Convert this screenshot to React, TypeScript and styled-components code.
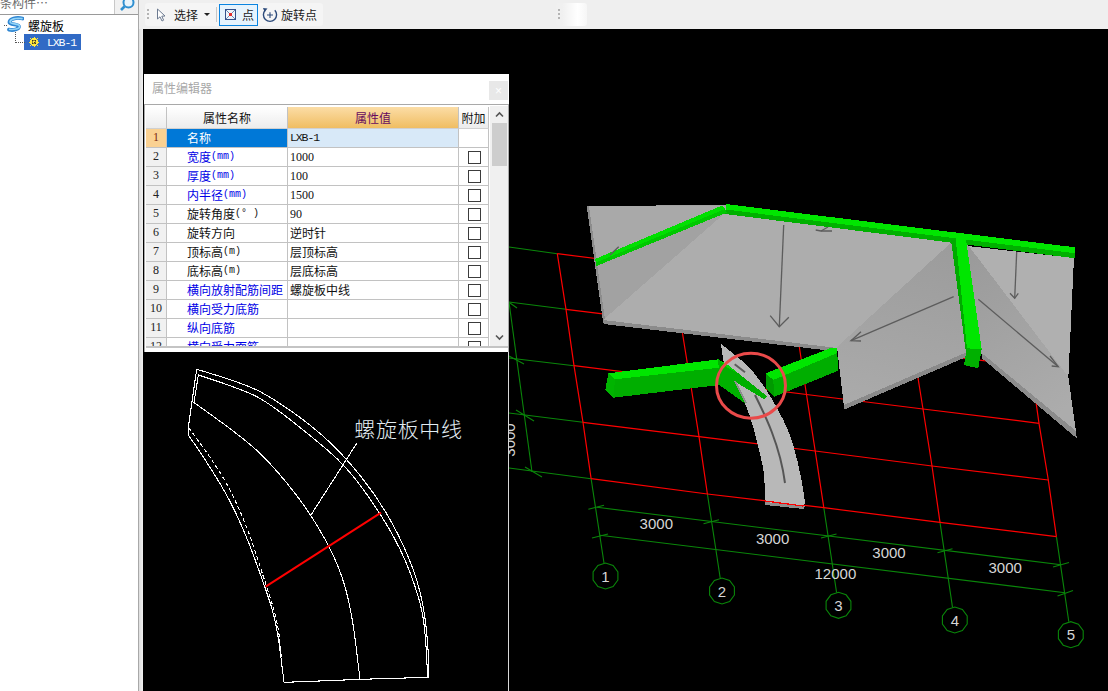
import React from "react";
import styled, { createGlobalStyle } from "styled-components";

const CJK = `"Noto Sans CJK SC", "Liberation Sans", sans-serif`;
const MONO = `"Liberation Mono", "Noto Sans CJK SC", monospace`;
const DIGITS = `"Liberation Serif", "Noto Sans CJK SC", serif`;

const Global = createGlobalStyle`
  html, body { margin: 0; padding: 0; background: #fff; overflow: hidden; }
  * { box-sizing: border-box; }
`;

const Root = styled.div`
  width: 1108px; height: 691px; display: flex; overflow: hidden;
  font-family: ${CJK}; font-size: 12px; color: #111;
`;

/* ---------- sidebar ---------- */
const Sidebar = styled.aside`
  width: 139px; flex: none; background: #fff; border-right: 1px solid #a8a8a8;
  display: flex; flex-direction: column;
`;
const SearchBar = styled.div`
  height: 15px; flex: none; display: flex; border-bottom: 1px solid #9a9a9a; overflow: hidden;
`;
const SearchInput = styled.div`
  width: 115px; flex: none; border-right: 1px solid #c8c8c8; color: #6a6a6a;
  font-size: 12px; line-height: 14px; margin-top: -4px; white-space: nowrap; overflow: hidden;
`;
const SearchBtn = styled.div`
  flex: 1; background: #f1f1f1; display: flex; justify-content: center; align-items: flex-start; overflow: hidden;
`;
const Tree = styled.div`
  display: flex; flex-direction: column;
`;
const RootNode = styled.div`
  position: relative; height: 19px; display: flex; align-items: center; gap: 4px; margin-left: 7px;
  font-size: 12px; color: #000; line-height: 19px; padding-bottom: 0;
  &::before { content: ""; position: absolute; left: -3px; top: 10px; width: 3px; border-top: 1px dotted #555; }
`;
const TreeLabel = styled.span`
  position: relative; top: 1px;
`;
const ChildNode = styled.div`
  position: relative; width: 57px; height: 16px; margin-left: 24px; background: #316ac5; color: #fff;
  display: flex; align-items: center; gap: 8px; padding-left: 5px;
  &::before { content: ""; position: absolute; left: -9px; top: -2px; width: 9px; height: 10px;
    border-left: 1px dotted #555; border-bottom: 1px dotted #555; }
`;
const MonoText = styled.span`
  font-family: ${MONO}; font-size: 11.5px; letter-spacing: -1.1px; line-height: 16px; white-space: nowrap;
  position: relative; top: 1px;
`;
const DigitText = styled.span`
  font-family: ${DIGITS}; font-size: 12px; line-height: 16px; white-space: nowrap;
  position: relative; top: 1px;
`;
const Unit = styled.span`
  font-family: ${MONO}; font-size: 10px;
`;

/* ---------- main ---------- */
const Main = styled.main`
  flex: 1; min-width: 0; display: flex; flex-direction: column; background: #efefef;
`;
const Toolbar = styled.div`
  height: 29px; flex: none; display: flex; align-items: flex-start; padding: 3px 0 0 6px; background: #efefef;
`;
const ToolGroup = styled.div`
  height: 23px; display: flex; align-items: center; background: #f5f5f5; border-radius: 3px;
`;
const MainGroup = styled(ToolGroup)`
  width: 178px; padding-left: 2px;
`;
const SpareGroup = styled(ToolGroup)`
  width: 31px; margin-left: 233px; padding-left: 2px;
  background: linear-gradient(90deg, #f0f0f0 20%, #fff 70%, #f6f6f6);
`;
const Grip = styled.span`
  width: 2px; height: 12px; flex: none; margin-right: 7px;
  background: repeating-linear-gradient(180deg, #b4b4b4 0 2px, transparent 2px 4px);
`;
const ToolText = styled.span<{ $gap?: number }>`
  font-size: 12px; color: #1a1a1a; white-space: nowrap; margin-left: ${(p) => p.$gap ?? 0}px;
`;
const Sep = styled.span`
  width: 1px; height: 15px; background: #c8c8c8; margin: 0 2px 0 6px; flex: none;
`;
const ActiveTool = styled.div`
  width: 39px; height: 22px; display: flex; align-items: center; gap: 6px; padding-left: 5px;
  background: #e6f3fd; border: 1px solid #0a84e0; flex: none; margin-right: 4px;
`;
const Caret = styled.span`
  width: 0; height: 0; margin-left: 6px; border-left: 3px solid transparent; border-right: 3px solid transparent;
  border-top: 3px solid #222;
`;
const Workspace = styled.div`
  flex: 1; min-height: 0; display: flex;
`;
const Gutter = styled.div`
  width: 4px; flex: none; background: linear-gradient(90deg, #dedede, #f1f1f1);
`;
const Canvas = styled.div`
  position: relative; flex: 1; background: #000; overflow: hidden;
`;
const SceneSvg = styled.svg`
  display: block;
`;
const PreviewSvg = styled.svg`
  display: block;
`;
const DimLabel = styled.text`
  font-family: "Liberation Sans", sans-serif; font-size: 15px; fill: #d6d6d6; text-anchor: middle;
`;

/* ---------- floating property panel ---------- */
const Panel = styled.section`
  position: absolute; left: 1px; top: 45px; width: 365px; height: 617px;
  display: flex; flex-direction: column; background: #fff;
`;
const TitleBar = styled.header`
  height: 30px; flex: none; position: relative; display: flex; align-items: center; padding: 0 0 4px 8px;
  color: #a8a8a8; font-size: 12px; background: #fff;
`;
const CloseBtn = styled.span`
  position: absolute; right: 1px; top: 7px; width: 19px; height: 19px; background: #e8e8e8; color: #fff;
  display: flex; align-items: center; justify-content: center; font: 12px "Liberation Sans", sans-serif;
`;
const TableArea = styled.div`
  height: 248px; flex: none; border-top: 1px solid #a9a9a9; border-left: 1px solid #a9a9a9; border-right: 1px solid #a9a9a9;
  padding: 2px 0 4px 1px; display: flex; flex-direction: column;
`;
const TableRow = styled.div`
  display: flex; height: 239px; flex: none;
`;
const Grid = styled.div`
  width: 343px; flex: none; height: 239px; overflow: hidden; margin-right: 1px;
`;
const Row = styled.div`
  display: grid; grid-template-columns: 21px 121px 171px 30px; height: 19px;
`;
const HeadRow = styled(Row)`
  height: 22px;
`;
const Cell = styled.div`
  border-right: 1px solid #c2c2c2; border-bottom: 1px solid #c2c2c2; display: flex; align-items: center;
  white-space: nowrap; overflow: hidden;
`;
const HeadCell = styled(Cell)<{ $active?: boolean }>`
  justify-content: center; font-size: 12px; border-bottom-color: #d0d0d0; padding-bottom: 1px;
  color: ${(p) => (p.$active ? "#660a60" : "#111")};
  background: ${(p) => (p.$active ? "linear-gradient(180deg,#fbdda6,#f0bd62)" : "linear-gradient(180deg,#fff,#ececec)")};
`;
const NumCell = styled(Cell)<{ $active?: boolean }>`
  justify-content: center; font-family: ${DIGITS}; font-size: 12px; padding-bottom: 1px;
  background: ${(p) => (p.$active ? "#fad192" : "#f1f1f1")};
  color: ${(p) => (p.$active ? "#7a2a10" : "#222")};
`;
const NameCell = styled(Cell)<{ $blue?: boolean; $active?: boolean }>`
  padding: 0 0 1px 20px; font-size: 12px;
  background: ${(p) => (p.$active ? "#0078d7" : "#fff")};
  color: ${(p) => (p.$active ? "#fff" : p.$blue ? "#0000e6" : "#111")};
`;
const ValueCell = styled(Cell)<{ $active?: boolean }>`
  padding: 0 0 2px 2px; font-size: 12px; color: #111;
  background: ${(p) => (p.$active ? "#d8e9f8" : "#fff")};
`;
const CheckCell = styled(Cell)`
  justify-content: center; padding-left: 2px;
`;
const Check = styled.span`
  width: 13px; height: 13px; border: 1px solid #3c3c3c; background: #fff; display: block;
`;
const Scrollbar = styled.div`
  width: 18px; flex: none; margin-top: -1px; background: #f0f0f0; display: flex; flex-direction: column; align-items: center;
`;
const ScrollArrow = styled.div`
  height: 17px; flex: none; display: flex; align-items: center; justify-content: center;
`;
const ScrollTrack = styled.div`
  flex: 1; width: 100%; display: flex; flex-direction: column; align-items: center;
`;
const ScrollThumb = styled.div`
  width: 15px; height: 43px; background: #cdcdcd;
`;
const PanelRule = styled.div`
  height: 2px; flex: none; background: #c4c4c4;
`;
const Preview = styled.div`
  flex: 1; background: #000; border-right: 1px solid #d8d8d8; overflow: hidden;
`;
const PreviewLabel = styled.text`
  font-family: ${CJK}; font-size: 63px; letter-spacing: 2px; fill: #e2edf3; font-weight: 300;
`;

/* ---------- drawing helpers ---------- */
type P = [number, number];
const pts = (a: P[]) => a.map((p) => p.join(",")).join(" ");
const curve = (a: P[], start = true) => {
  let d = start ? `M${a[0][0]},${a[0][1]}` : `L${a[0][0]},${a[0][1]}`;
  for (let i = 1; i < a.length - 1; i++) {
    const mx = (a[i][0] + a[i + 1][0]) / 2;
    const my = (a[i][1] + a[i + 1][1]) / 2;
    d += ` Q${a[i][0]},${a[i][1]} ${mx},${my}`;
  }
  const l = a[a.length - 1];
  return `${d} L${l[0]},${l[1]}`;
};
const ring = (cx: number, cy: number, r: number) =>
  pts(Array.from({ length: 10 }, (_, i) => {
    const t = (Math.PI / 5) * i + Math.PI / 10;
    return [+(cx + r * Math.cos(t)).toFixed(1), +(cy + r * Math.sin(t)).toFixed(1)] as P;
  }));

const redRows: P[][] = [
  [[557.3, 253.7], [1022, 312]],
  [[566, 309.3], [1031, 366.5]],
  [[574, 365.7], [690, 380], [806.5, 394.5], [923, 409], [1039, 423.3]],
  [[583, 422.3], [699, 436.7], [815.2, 451], [932, 466], [1048.3, 480]],
  [[591.1, 478.7], [707.4, 494], [823.8, 507.7], [940, 522.3], [1056.4, 536.7]],
];
const redCols: P[][] = [
  [[557.3, 253.7], [566, 309.3], [574, 365.7], [583, 422.3], [591.1, 478.7]],
  [[673, 268], [681, 324], [690, 380], [699, 436.7], [707.4, 494]],
  [[790, 282], [798, 338], [806.5, 394.5], [815.2, 451], [823.8, 507.7]],
  [[906, 297], [914, 353], [923, 409], [932, 466], [940, 522.3]],
  [[1022, 312], [1031, 366.5], [1039, 423.3], [1048.3, 480], [1056.4, 536.7]],
];
const greenLines: [P, P][] = [
  [[509, 247], [557.3, 253.7]], [[509, 302], [566, 309.3]], [[509, 358], [574, 365.7]],
  [[509, 413], [583, 422.3]], [[509, 468], [591.1, 478.7]],
  [[509, 302], [532, 472]],
  [[591.1, 478.7], [604, 563]], [[707.4, 494], [720.2, 578]], [[823.8, 507.7], [836.6, 592.7]],
  [[940, 522.3], [952.5, 607.3]], [[1056.4, 536.7], [1068.8, 621.7]],
  [[597, 507.3], [1061, 564.7]], [[600, 535.3], [1065, 592.7]],
];
const greenTicks: [P, P][] = [
  [[510, 303], [517, 308]], [[509, 356], [524, 364]], [[516, 410], [534, 421]], [[525, 467], [542, 477]],
  [[588.4, 509.3], [604, 505.3]], [[703.5, 523.7], [719, 519.7]], [[821, 538], [836.5, 534]],
  [[937.5, 552.7], [952.5, 548.7]], [[1053, 567], [1069, 562.5]],
  [[592, 538], [608, 534]], [[1057.5, 596], [1073, 590.5]],
];
const bubbles: { n: number; c: P }[] = [
  { n: 1, c: [605.5, 576] }, { n: 2, c: [722, 591] }, { n: 3, c: [838.5, 605.3] },
  { n: 4, c: [954.8, 620] }, { n: 5, c: [1070.8, 634.7] },
];
const dims: { t: string; c: P }[] = [
  { t: "3000", c: [656.3, 528.5] }, { t: "3000", c: [772.6, 543.5] }, { t: "3000", c: [889, 557.8] },
  { t: "3000", c: [1005.2, 572.5] }, { t: "12000", c: [835.4, 578.8] },
];
const arrows: P[][] = [
  [[783.7, 225], [779.3, 326.7]], [[770.2, 315.7], [779.3, 326.7], [788.8, 317.3]],
  [[815.7, 230], [821, 231], [832, 231]], [[821, 231], [828, 227]],
  [[953.7, 296.7], [851, 340.7]], [[861, 331.7], [851, 340.7], [861, 341]],
  [[1016.7, 251.7], [1014.7, 298.3]], [[1010, 293.3], [1014.7, 298.3], [1018.3, 293.3]],
  [[978.3, 299.3], [1058.3, 366.7]], [[1050, 356], [1058.3, 366.7], [1051.7, 366]],
  [[618.7, 246.7], [610, 255]],
];
const plateOuter: P[] = [[721, 344], [746.7, 363.3], [763.3, 385], [776.7, 406.7], [790, 433.3], [798.3, 463.3], [803.3, 490], [805, 503]];
const plateInner: P[] = [[765, 502.3], [765, 476.7], [760, 453.3], [753.3, 426.7], [745, 401.7], [734, 381.7], [726, 370], [723, 360], [721, 344]];

const Scene = () => (
  <SceneSvg width={965} height={662} viewBox="143 29 965 662" xmlns="http://www.w3.org/2000/svg">
    <defs>
      <linearGradient id="midSlab" x1="0.6" y1="0" x2="0.4" y2="1">
        <stop offset="0" stopColor="#9c9c9c" />
        <stop offset="1" stopColor="#aaaaaa" />
      </linearGradient>
      <linearGradient id="rightSlab" x1="0.2" y1="0" x2="0.6" y2="1">
        <stop offset="0" stopColor="#9a9a9a" />
        <stop offset="1" stopColor="#acacac" />
      </linearGradient>
    </defs>
    <g fill="none">
      <g stroke="#0a860a" strokeWidth={1.1}>
        {greenLines.map(([a, b], i) => <line key={i} x1={a[0]} y1={a[1]} x2={b[0]} y2={b[1]} />)}
        {greenTicks.map(([a, b], i) => <line key={i} x1={a[0]} y1={a[1]} x2={b[0]} y2={b[1]} />)}
        {bubbles.map((b) => <polygon key={b.n} points={ring(b.c[0], b.c[1], 13)} />)}
      </g>
      <g stroke="#ff0000" strokeWidth={1.2}>
        {redRows.map((r, i) => <polyline key={i} points={pts(r)} />)}
        {redCols.map((r, i) => <polyline key={i} points={pts(r)} />)}
      </g>
    </g>

    {dims.map((d, i) => <DimLabel key={i} x={d.c[0]} y={d.c[1]}>{d.t}</DimLabel>)}
    {bubbles.map((b) => <DimLabel key={b.n} x={b.c[0]} y={b.c[1] + 5.5}>{b.n}</DimLabel>)}
    <DimLabel x={515} y={440} transform="rotate(-90 515 440)">3000</DimLabel>

    <g shapeRendering="crispEdges">
      {/* left slab */}
      <polygon points="586.7,206 725.5,205 727,215 603,322" fill="#a2a2a2" />
      <polygon points="586.7,206 725,206 596,262" fill="#a9a9a9" />
      <polygon points="586.7,206 589,206 605,320 603,321" fill="#8c8c8c" />
      <polygon points="725,213 955,240 838,349 603,320" fill="#adadad" />
      <polygon points="603,320 837.6,348 832.5,351 603.6,324" fill="#8b8b8b" />
      {/* middle slab */}
      <polygon points="954,240 837,347 844,407 967,353" fill="url(#midSlab)" />
      <polygon points="844,405 967,352 967,356.7 844.3,409.5" fill="#8a8a8a" />
      {/* right slab */}
      <polygon points="967.3,246 1074,258 1068.3,378 1064,378" fill="#b0b0b0" />
      <polygon points="955,243 968,245 1068.3,376.7 1076,431.7 981.7,354 965,352" fill="url(#rightSlab)" />
      <polygon points="981.7,353 1076,431 1076.7,438.3 981.7,358" fill="#8c8c8c" />

      {/* spiral plate */}
      <path d={`${curve(plateOuter)} L803.5,505 ${curve(plateInner, false)} Z`} fill="#b8b8b8" />
      <polygon points="765,502 805,506 804,509 765,505" fill="#8e8e8e" />
      <line x1={765} y1={501} x2={803} y2={506} stroke="#ff0000" strokeWidth={1.2} />

      {/* left beam */}
      <polygon points="608.3,373.3 718.3,359.3 728,366.7 615,379.3" fill="#00e600" />
      <polygon points="615,379.3 728,366.7 719.3,385 613.3,397.7" fill="#00ae00" />
      <polygon points="608.3,373.3 615,379.3 613.3,397.7 605.3,390" fill="#00b400" />
      <polygon points="718.3,359.3 728,365 767.7,396.7 764,399 734,381 745,403.3 719.3,385" fill="#00b000" />
      <polygon points="718.3,359.3 728,365 738,373 728,368" fill="#00d800" />
      <polygon points="734,381 764,399 757,399 745,403.3" fill="#b8b8b8" />
      <polygon points="734,381 736,381 747,403 745,403.3" fill="#8e8e8e" />

      {/* right beam */}
      <polygon points="765.7,373.3 830,348.3 837.3,348.3 837.3,353 773.3,380" fill="#00e600" />
      <polygon points="773.3,380 837.3,353 838.3,370.7 774.3,396.7" fill="#00ae00" />
      <polygon points="765.7,373.3 773.3,380 774.3,396.7 766,388.3" fill="#009a00" />

      {/* top beam */}
      <polygon points="725.5,204 1075,247.3 1075,253.3 725.5,209.5" fill="#00e600" />
      <polygon points="725.5,209.5 1075,253.3 1075,258.3 725,214" fill="#00b000" />
      {/* left upper beam */}
      <polygon points="595,259 722,205.5 725,209 596,262.5" fill="#00e000" />
      <polygon points="596,262.5 725,209 727,212.5 596.5,266" fill="#00c800" />
      {/* cross beam */}
      <polygon points="951,240 958,240 970,349 965.5,349" fill="#00aa00" />
      <polygon points="955.4,236 965.5,236 981.7,349.3 967,348.3" fill="#00e600" />
      <polygon points="966.7,348.3 981.7,349.3 978.3,368.3 964,365" fill="#00b000" />
    </g>

    <g fill="none" stroke="#5c5c5c" strokeWidth={1.3}>
      {arrows.map((a, i) => <polyline key={i} points={pts(a)} />)}
      <line x1={734.7} y1={364.3} x2={745} y2={372.3} strokeWidth={2} />
      <path d="M755,395 C765,415 780,445 785,483" strokeWidth={2} stroke="#555" />
    </g>
    <ellipse cx={751} cy={385.7} rx={34.5} ry={32.5} fill="none" stroke="#ea4a4a" strokeWidth={3} />
  </SceneSvg>
);

const outerA: P[] = [[155, 58], [300, 100], [400, 155], [510, 235], [600, 320], [700, 445], [780, 590], [830, 730], [850, 880], [850, 980]];
const outerB: P[] = [[160, 75], [300, 120], [380, 165], [500, 260], [600, 345], [690, 465], [770, 600], [822, 740], [840, 830], [848, 980]];
const middle: P[] = [[147, 158], [300, 265], [400, 365], [500, 495], [580, 640], [620, 780], [645, 988]];
const leftSolid: P[] = [[130, 255], [210, 370], [290, 520], [360, 710], [395, 820], [417, 995]];
const leftDash: P[] = [[130, 232], [220, 350], [300, 510], [365, 710], [400, 820], [412, 960]];

const PreviewDrawing = () => (
  <PreviewSvg width={364} height={339} viewBox="-3 6 1092 1017">
    <g fill="none" stroke="#fff" strokeWidth={3.2} shapeRendering="crispEdges">
      <path d={curve(outerA)} />
      <path d={curve(outerB)} />
      <path d={curve(middle)} />
      <path d={curve(leftSolid)} />
      <path d={curve(leftDash)} strokeDasharray="12 8" />
      <polyline points="155,58 130,232 130,255" />
      <line x1={160} y1={75} x2={147} y2={158} />
      <polyline points="417,997 550,992 645,988 850,982 850,980" />
      <line x1={635} y1={280} x2={498} y2={495} />
    </g>
    <line x1={362} y1={710} x2={708} y2={488} stroke="#ff0000" strokeWidth={6} />
    <PreviewLabel x={628} y={260}>螺旋板中线</PreviewLabel>
  </PreviewSvg>
);

const LogoS = () => (
  <svg width={17} height={17} viewBox="0 0 17 17">
    <g fill="none" strokeLinecap="round">
      <path d="M15.5,2.5 C9,1 2.5,3 2.5,6.2 C2.5,9 12,7.8 12,10.6 C12,13.4 6,14.6 2,13.6" stroke="#2f86d2" strokeWidth={3.8} />
      <path d="M15,2.6 C9,1.4 3,3.4 3,6 C3,8.4 12.6,7.4 12.6,10.4 C12.6,13 6.5,14 2.6,13.3" stroke="#93d4f7" strokeWidth={1.6} />
    </g>
  </svg>
);
const Gear = () => (
  <svg width={10} height={10} viewBox="0 0 10 10" shapeRendering="crispEdges">
    <circle cx={5} cy={5} r={4.2} fill="#ffe93c" />
    <path d="M5,0V10M0,5H10M1.2,1.2L8.8,8.8M8.8,1.2L1.2,8.8" stroke="#ffe93c" strokeWidth={1} />
    <path d="M3,3H4V4H3ZM6,3H7V4H6ZM3,6H4V7H3ZM6,6H7V7H6ZM4.5,4.5H5.5V5.5H4.5Z" fill="#3a3a20" />
    <path d="M4,3H6V4H4ZM3,4H4V6H3ZM6,4H7V6H6ZM4,6H6V7H4Z" fill="#8a8430" />
  </svg>
);
const Magnifier = () => (
  <svg width={18} height={11} viewBox="0 0 18 11">
    <circle cx={10.5} cy={2.5} r={5} fill="#e8f4fc" stroke="#2f8fd0" strokeWidth={2} />
    <line x1={6.5} y1={6.5} x2={3} y2={10} stroke="#2f8fd0" strokeWidth={2.6} />
  </svg>
);
const CursorIcon = () => (
  <svg width={10} height={14} viewBox="0 0 10 14">
    <path d="M1.5,1 L1.5,11 L4,8.8 L6,13 L7.6,12.2 L5.8,8.2 L9,8 Z" fill="#fff" stroke="#6c7a90" strokeWidth={1} />
  </svg>
);
const PointIcon = () => (
  <svg width={11} height={11} viewBox="0 0 11 11">
    <rect x={0.5} y={0.5} width={10} height={10} fill="#eef4fa" stroke="#34508a" />
    <path d="M1,1 L10,10 M10,1 L1,10" stroke="#5a78aa" strokeWidth={0.9} />
    <rect x={4} y={4} width={3} height={3} fill="#e03030" />
  </svg>
);
const RotateIcon = () => (
  <svg width={16} height={16} viewBox="0 0 16 16">
    <path d="M3.2,3.2 A6.6,6.6 0 1 0 12.8,3.2" fill="none" stroke="#2c4a7a" strokeWidth={1.4} />
    <path d="M1,1 L5.5,1.6 L2.6,5 Z" fill="#2c4a7a" />
    <path d="M8,5.2 V11 M5,8 H11" stroke="#2c4a7a" strokeWidth={1.1} />
  </svg>
);
const Chevron = ({ up }: { up?: boolean }) => (
  <svg width={9} height={7} viewBox="0 0 9 7">
    <path d={up ? "M1,5.5 L4.5,2 L8,5.5" : "M1,1.5 L4.5,5 L8,1.5"} fill="none" stroke="#555" strokeWidth={1.6} />
  </svg>
);

type RowData = { name: string; unit?: string; value: string; blue?: boolean; kind?: "mono" | "digit" };
const rows: RowData[] = [
  { name: "名称", value: "LXB-1", kind: "mono" },
  { name: "宽度", unit: "(mm)", value: "1000", blue: true, kind: "digit" },
  { name: "厚度", unit: "(mm)", value: "100", blue: true, kind: "digit" },
  { name: "内半径", unit: "(mm)", value: "1500", blue: true, kind: "digit" },
  { name: "旋转角度", unit: "(° )", value: "90", kind: "digit" },
  { name: "旋转方向", value: "逆时针" },
  { name: "顶标高", unit: "(m)", value: "层顶标高" },
  { name: "底标高", unit: "(m)", value: "层底标高" },
  { name: "横向放射配筋间距", value: "螺旋板中线", blue: true },
  { name: "横向受力底筋", value: "", blue: true },
  { name: "纵向底筋", value: "", blue: true },
  { name: "横向受力面筋", value: "", blue: true },
];

const valueOf = (r: RowData) =>
  r.kind === "mono" ? <MonoText>{r.value}</MonoText> : r.kind === "digit" ? <DigitText>{r.value}</DigitText> : r.value;

export default function App() {
  return (
    <Root>
      <Global />
      <Sidebar>
        <SearchBar>
          <SearchInput>条构件…</SearchInput>
          <SearchBtn><Magnifier /></SearchBtn>
        </SearchBar>
        <Tree>
          <RootNode><LogoS /><TreeLabel>螺旋板</TreeLabel></RootNode>
          <ChildNode><Gear /><MonoText>LXB-1</MonoText></ChildNode>
        </Tree>
      </Sidebar>
      <Main>
        <Toolbar>
          <MainGroup>
            <Grip />
            <CursorIcon />
            <ToolText $gap={8}>选择</ToolText>
            <Caret />
            <Sep />
            <ActiveTool><PointIcon /><ToolText>点</ToolText></ActiveTool>
            <RotateIcon />
            <ToolText $gap={3}>旋转点</ToolText>
          </MainGroup>
          <SpareGroup><Grip /></SpareGroup>
        </Toolbar>
        <Workspace>
          <Gutter />
          <Canvas>
            <Scene />
            <Panel>
              <TitleBar>属性编辑器<CloseBtn>×</CloseBtn></TitleBar>
              <TableArea>
                <TableRow>
                  <Grid>
                    <HeadRow>
                      <HeadCell />
                      <HeadCell>属性名称</HeadCell>
                      <HeadCell $active>属性值</HeadCell>
                      <HeadCell>附加</HeadCell>
                    </HeadRow>
                    {rows.map((r, i) => (
                      <Row key={i}>
                        <NumCell $active={i === 0}>{i + 1}</NumCell>
                        <NameCell $blue={r.blue} $active={i === 0}>
                          {r.name}{r.unit && <Unit>{r.unit}</Unit>}
                        </NameCell>
                        <ValueCell $active={i === 0}>{valueOf(r)}</ValueCell>
                        <CheckCell>{i > 0 && <Check />}</CheckCell>
                      </Row>
                    ))}
                  </Grid>
                  <Scrollbar>
                    <ScrollArrow><Chevron up /></ScrollArrow>
                    <ScrollTrack><ScrollThumb /></ScrollTrack>
                    <ScrollArrow><Chevron /></ScrollArrow>
                  </Scrollbar>
                </TableRow>
                <PanelRule />
              </TableArea>
              <Preview><PreviewDrawing /></Preview>
            </Panel>
          </Canvas>
        </Workspace>
      </Main>
    </Root>
  );
}
